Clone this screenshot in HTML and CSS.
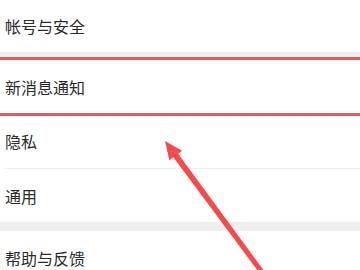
FILE: index.html
```html
<!DOCTYPE html>
<html lang="zh-CN">
<head>
<meta charset="utf-8">
<link rel="stylesheet" href="styles.css">
</head>
<body>
<div class="page">
  <div class="row row-first"><span class="label">帐号与安全</span></div>
  <div class="gap gap-small"></div>
  <div class="row highlight"><span class="label">新消息通知</span></div>
  <div class="row divided"><span class="label">隐私</span></div>
  <div class="row row-short"><span class="label">通用</span></div>
  <div class="gap"></div>
  <div class="row"><span class="label">帮助与反馈</span></div>
  <svg class="arrow" width="360" height="270" viewBox="0 0 360 270">
    <polygon fill="#f44c4c" points="165,141 182.1,150.7 178.1,153.7 266,273.5 262,276.5 173.3,157.3 169.3,160.3"/>
  </svg>
</div>
</body>
</html>
```

FILE: styles.css
```css
html, body {
  margin: 0;
  padding: 0;
  background: #ffffff;
}
.page {
  position: relative;
  width: 360px;
  height: 270px;
  overflow: hidden;
  font-family: "Noto Sans CJK SC", "Noto Sans", sans-serif;
  color: #2b2b2b;
}
.row {
  position: relative;
  height: 54px;
  display: flex;
  align-items: center;
  padding-left: 5px;
  background: #ffffff;
}
.row-first {
  height: 52px;
}
.row-short {
  height: 53px;
}
.label {
  font-size: 16px;
  line-height: 1;
}
.divided::after {
  content: "";
  position: absolute;
  left: 5px;
  right: 0;
  bottom: -1px;
  height: 1px;
  background: #eeeeee;
}
.divided {
  margin-bottom: 1px;
}
.gap {
  height: 9px;
  background: #efefef;
}
.gap-small {
  height: 8px;
}
.highlight {
  z-index: 2;
}
.highlight::after {
  content: "";
  position: absolute;
  left: -4px;
  right: -4px;
  top: -3px;
  bottom: -2px;
  border-top: 3px solid #e85a5b;
  border-bottom: 3px solid #e85a5b;
}
.arrow {
  position: absolute;
  left: 0;
  top: 0;
  z-index: 3;
}
```
